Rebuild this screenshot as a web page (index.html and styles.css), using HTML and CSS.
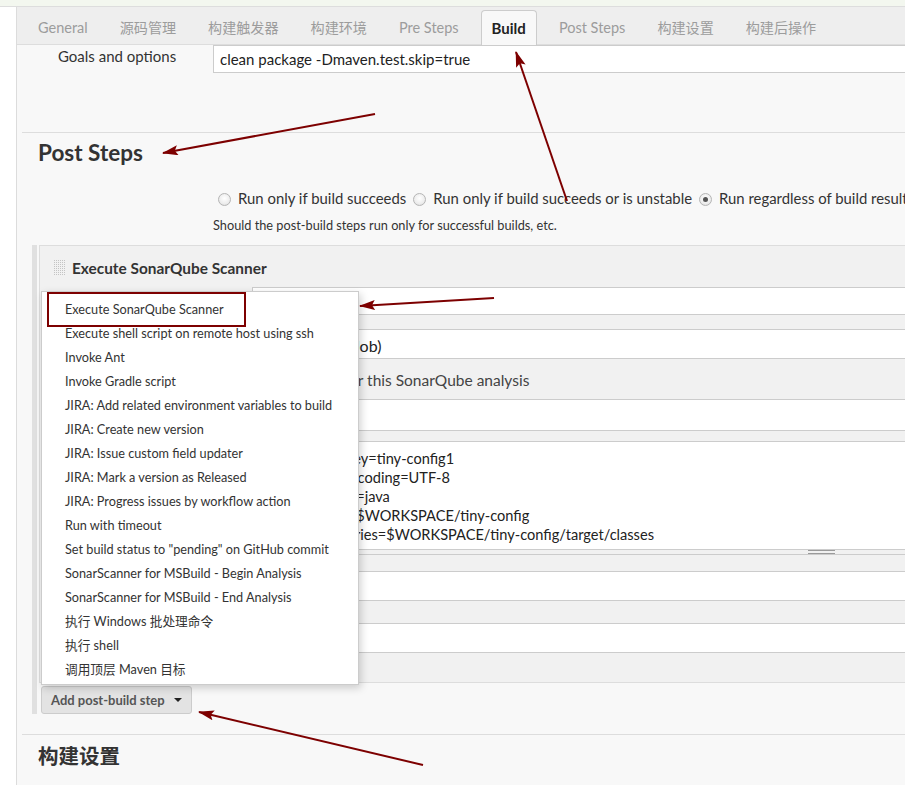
FILE: index.html
```html
<!DOCTYPE html>
<html lang="zh-CN">
<head>
<meta charset="utf-8">
<title>Jenkins config</title>
<link rel="stylesheet" href="styles.css">
</head>
<body>
<div class="topstrip"></div>
<div class="page">
  <div class="side"></div>
  <main class="main">
    <nav class="tabbar">
      <span class="tab">General</span>
      <span class="tab cjk">源码管理</span>
      <span class="tab cjk">构建触发器</span>
      <span class="tab cjk">构建环境</span>
      <span class="tab">Pre Steps</span>
      <span class="tab active">Build</span>
      <span class="tab">Post Steps</span>
      <span class="tab cjk">构建设置</span>
      <span class="tab cjk">构建后操作</span>
    </nav>

    <div class="goals-row">
      <label class="setting-name">Goals and options</label>
      <input class="text-input goals-input" type="text" value="clean package -Dmaven.test.skip=true">
    </div>

    <section class="section post-steps">
      <h2 class="section-title">Post Steps</h2>
      <div class="radio-row">
        <label class="radio-item"><span class="radio"></span>Run only if build succeeds</label>
        <label class="radio-item"><span class="radio"></span>Run only if build succeeds or is unstable</label>
        <label class="radio-item"><span class="radio checked"></span>Run regardless of build result</label>
      </div>
      <div class="help-line">Should the post-build steps run only for successful builds, etc.</div>

      <div class="hetero-list">
        <div class="chunk">
          <div class="chunk-header">
            <span class="grip"></span>
            <span class="chunk-title">Execute SonarQube Scanner</span>
          </div>
          <div class="chunk-body">
            <div class="row">
              <span class="row-label">Task to run</span>
              <div class="field field-28"></div>
            </div>
            <div class="row gap-14">
              <span class="row-label">JDK</span>
              <div class="field field-30 select-field">(Inherit From Job)</div>
            </div>
            <div class="row help-row">
              <span class="row-label"></span>
              <div class="help-text">JDK to be used for this SonarQube analysis</div>
            </div>
            <div class="row">
              <span class="row-label">Path to project properties</span>
              <div class="field field-32"></div>
            </div>
            <div class="row gap-10">
              <span class="row-label">Analysis properties</span>
              <div class="textarea-wrap">
                <div class="textarea">sonar.projectKey=tiny-config1
sonar.sourceEncoding=UTF-8
sonar.language=java
sonar.sources=$WORKSPACE/tiny-config
sonar.java.binaries=$WORKSPACE/tiny-config/target/classes</div>
                <div class="resize-grip"><span class="grip-lines"></span></div>
              </div>
            </div>
            <div class="row gap-16">
              <span class="row-label">Additional arguments</span>
              <div class="field field-30"></div>
            </div>
            <div class="row gap-22">
              <span class="row-label">JVM Options</span>
              <div class="field field-30"></div>
            </div>
          </div>
        </div>

        <div class="add-wrap">
          <ul class="menu">
            <li>Execute SonarQube Scanner</li>
            <li>Execute shell script on remote host using ssh</li>
            <li>Invoke Ant</li>
            <li>Invoke Gradle script</li>
            <li>JIRA: Add related environment variables to build</li>
            <li>JIRA: Create new version</li>
            <li>JIRA: Issue custom field updater</li>
            <li>JIRA: Mark a version as Released</li>
            <li>JIRA: Progress issues by workflow action</li>
            <li>Run with timeout</li>
            <li>Set build status to "pending" on GitHub commit</li>
            <li>SonarScanner for MSBuild - Begin Analysis</li>
            <li>SonarScanner for MSBuild - End Analysis</li>
            <li>执行 Windows 批处理命令</li>
            <li>执行 shell</li>
            <li>调用顶层 Maven 目标</li>
          </ul>
          <button class="add-btn" type="button">Add post-build step<span class="caret"></span></button>
        </div>
      </div>
    </section>

    <section class="section build-settings">
      <h2 class="section-title cjk-title">构建设置</h2>
    </section>
  </main>
</div>

<svg class="annotations" width="905" height="785" viewBox="0 0 905 785" aria-hidden="true">
  <defs>
    <marker id="ah" markerUnits="userSpaceOnUse" markerWidth="18" markerHeight="12" refX="15" refY="5" orient="auto">
      <path d="M0,0 L16,5 L0,10 L3,5 Z" fill="#7d0000"/>
    </marker>
  </defs>
  <g stroke="#7d0000" stroke-width="2" fill="none">
    <line x1="375" y1="114" x2="163" y2="153" marker-end="url(#ah)"/>
    <line x1="567" y1="201" x2="516" y2="52" marker-end="url(#ah)"/>
    <line x1="494" y1="298" x2="360" y2="306" marker-end="url(#ah)"/>
    <line x1="423" y1="765" x2="199" y2="712" marker-end="url(#ah)"/>
    <rect x="48" y="293" width="197" height="33"/>
  </g>
</svg>
</body>
</html>
```

FILE: styles.css
```css
* { box-sizing: border-box; }

html, body {
  margin: 0;
  padding: 0;
}

body {
  width: 905px;
  height: 785px;
  overflow: hidden;
  position: relative;
  background: #ffffff;
  color: #333333;
  font-family: Lato, "Noto Sans CJK SC", sans-serif;
}

.topstrip {
  height: 7px;
  background: #f3f7ef;
  border-bottom: 1px solid #dddddd;
}

.page {
  display: flex;
}

.side {
  width: 16px;
  flex: none;
  background: #ffffff;
}

.main {
  flex: none;
  width: 1500px;
  min-height: 800px;
  background: #f8f8f8;
  border-left: 1px solid #dcdcdc;
}

/* Tabs */
.tabbar {
  height: 38px;
  display: flex;
  align-items: flex-end;
  padding-left: 5px;
  background: #eeeeee;
  border-bottom: 1px solid #dddddd;
}

.tab {
  height: 34px;
  line-height: 36px;
  padding: 0 16px;
  font-size: 14.5px;
  color: #9c9c9c;
  white-space: nowrap;
}

.tab.cjk {
  font-size: 14.1px;
}

.tab.active {
  height: 35px;
  line-height: 35px;
  margin: 0 6px -1px;
  padding: 0 10px;
  color: #222222;
  font-weight: bold;
  font-size: 15px;
  background: #f8f8f8;
  border: 1px solid #cccccc;
  border-bottom: none;
  border-radius: 4px 4px 0 0;
}

/* Goals row */
.goals-row {
  display: grid;
  grid-template-columns: 196px 1250px;
  height: 28px;
}

.setting-name {
  padding: 1px 0 0 41px;
  line-height: 20px;
  font-size: 15px;
  color: #333333;
}

.text-input {
  height: 28px;
  border: 1px solid #cccccc;
  background: #ffffff;
  padding: 0 6px;
  font-family: inherit;
  font-size: 15px;
  color: #222222;
  outline: none;
  border-radius: 0;
}

/* Sections */
.section {
  margin-left: 5px;
  border-top: 1px solid #dddddd;
}

.post-steps {
  margin-top: 59px;
}

.build-settings {
  margin-top: 20px;
}

.section-title {
  margin: 6px 0 0;
  padding-left: 16px;
  font-size: 22.5px;
  line-height: 28px;
  font-weight: bold;
  color: #333333;
}

.cjk-title {
  font-size: 20.5px;
  margin-top: 7px;
}

.radio-row {
  margin-top: 20px;
  padding-left: 191px;
  display: flex;
  white-space: nowrap;
  font-size: 14.9px;
  line-height: 22px;
}

.radio-item {
  display: flex;
  align-items: center;
  margin-right: 2px;
}

.radio {
  width: 13px;
  height: 13px;
  margin: 3px 7px 0 5px;
  border-radius: 50%;
  border: 1px solid #b5b5b5;
  background: radial-gradient(circle at 50% 40%, #ffffff 0%, #ededed 60%, #d6d6d6 100%);
  position: relative;
  flex: none;
}

.radio.checked::after {
  content: "";
  position: absolute;
  left: 3px;
  top: 3px;
  width: 5px;
  height: 5px;
  border-radius: 50%;
  background: #555555;
}

.help-line {
  margin-top: 7px;
  padding-left: 191px;
  font-size: 12.75px;
  line-height: 18px;
  color: #333333;
  white-space: nowrap;
}

/* Hetero list */
.hetero-list {
  margin: 11px 0 0 10px;
  border-left: 5px solid #e0e0e0;
}

.chunk {
  margin-left: 2px;
  background: #f1f1f1;
  border: 1px solid #dddddd;
}

.chunk-header {
  height: 41px;
  display: flex;
  align-items: flex-start;
  padding: 13px 0 0 13px;
}

.grip {
  width: 12px;
  height: 17px;
  margin-right: 7px;
  background-color: #f1f1f1;
  background-image:
    linear-gradient(90deg, #f1f1f1 1px, transparent 1px),
    linear-gradient(#f1f1f1 1px, #c4c4c4 1px);
  background-size: 2px 2px;
}

.chunk-title {
  font-size: 15.4px;
  line-height: 18px;
  font-weight: bold;
  color: #333333;
}

.chunk-body {
  padding-bottom: 29px;
}

.row {
  display: grid;
  grid-template-columns: 212px 1138px;
}

.row-label {
  padding: 6px 0 0 20px;
  font-size: 15px;
  color: #333333;
}

.gap-10 { margin-top: 10px; }
.gap-14 { margin-top: 14px; }
.gap-16 { margin-top: 16px; }
.gap-22 { margin-top: 22px; }

.field {
  background: #ffffff;
  border: 1px solid #cccccc;
  padding: 0 6px;
  font-size: 15px;
  color: #222222;
  white-space: nowrap;
}

.field-28 { height: 28px; line-height: 26px; }
.field-30 { height: 30px; line-height: 28px; }
.field-32 { height: 32px; line-height: 30px; }

.select-field {
  font-size: 16px;
  padding-top: 2px;
}

.help-row {
  height: 40px;
}

.help-text {
  margin-left: -16px;
  padding: 11px 0 0;
  font-size: 15.5px;
  line-height: 20px;
  color: #444444;
  white-space: nowrap;
}

.textarea-wrap {
  display: flex;
  flex-direction: column;
}

.textarea {
  height: 109px;
  background: #ffffff;
  border: 1px solid #cccccc;
  padding: 7px 6px 0 8px;
  font-size: 14.6px;
  line-height: 19px;
  white-space: pre;
  color: #222222;
  overflow: hidden;
}

.resize-grip {
  height: 5px;
  border-bottom: 1px solid #cccccc;
  display: flex;
  justify-content: center;
}

.grip-lines {
  width: 27px;
  height: 4px;
  border-top: 1px solid #9a9a9a;
  border-bottom: 1px solid #9a9a9a;
}

/* Add button + menu */
.add-wrap {
  position: relative;
  margin: 3px 0 0 4px;
  display: flex;
}

.add-btn {
  height: 28px;
  padding: 0 9px 0 9px;
  display: flex;
  align-items: center;
  background: #e3e3e3;
  border: 1px solid #cccccc;
  border-radius: 3px;
  font-family: inherit;
  font-size: 13px;
  font-weight: bold;
  color: #555555;
}

.caret {
  margin-left: 9px;
  width: 0;
  height: 0;
  border-left: 4px solid transparent;
  border-right: 4px solid transparent;
  border-top: 4px solid #222222;
}

.menu {
  position: absolute;
  left: 0;
  bottom: 100%;
  margin: 0 0 1px;
  width: 318px;
  padding: 5px 0 3px;
  list-style: none;
  background: #ffffff;
  border: 1px solid #cccccc;
  box-shadow: 2px 3px 8px rgba(0, 0, 0, 0.18);
  z-index: 5;
}

.menu li {
  height: 24px;
  line-height: 24px;
  padding-left: 23px;
  font-size: 12.7px;
  color: #333333;
  white-space: nowrap;
}

/* Annotation overlay */
.annotations {
  position: absolute;
  left: 0;
  top: 0;
  z-index: 10;
  pointer-events: none;
}
```
